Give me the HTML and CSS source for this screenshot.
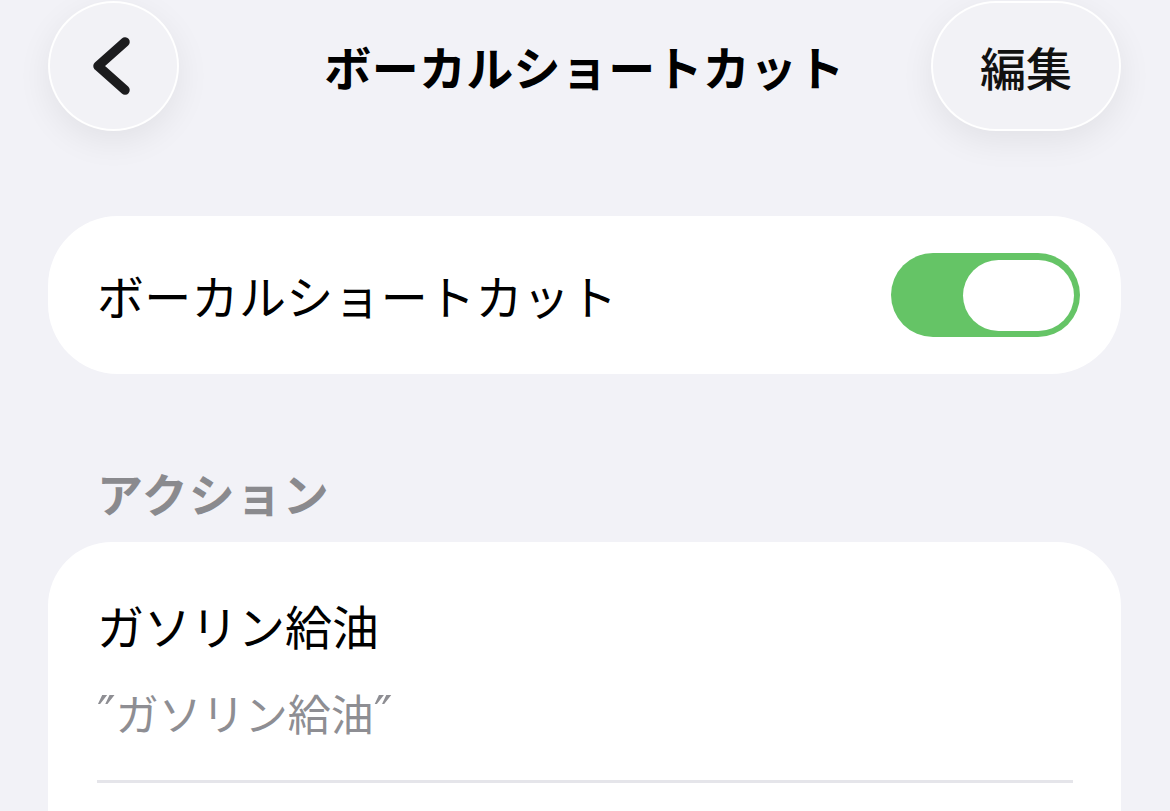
FILE: index.html
```html
<!DOCTYPE html>
<html lang="ja">
<head>
    <meta charset="UTF-8">
    <title>ボーカルショートカット</title>
    <link rel="stylesheet" href="styles.css">
</head>
<body>
    <div class="page">
        <div class="header">
            <div class="headerLeft">
                <button class="roundBtn backBtn" type="button">
                    <svg width="60" height="70" viewBox="0 0 60 70">
                        <path d="M44 11 L17 35 L44 59" fill="none" stroke="#1c1c1e" stroke-width="9.5" stroke-linecap="round" stroke-linejoin="round"/>
                    </svg>
                </button>
            </div>
            <div class="title">ボーカルショートカット</div>
            <div class="headerRight">
                <button class="roundBtn editBtn" type="button">編集</button>
            </div>
        </div>

        <div class="card switchCard">
            <span class="rowText">ボーカルショートカット</span>
            <div class="toggle on">
                <div class="knob"></div>
            </div>
        </div>

        <div class="sectionTitle">アクション</div>

        <div class="card listCard">
            <div class="item">
                <div class="itemTitle">ガソリン給油</div>
                <div class="itemSub"><span class="quote">″</span>ガソリン給油<span class="quote">″</span></div>
                <div class="divider"></div>
            </div>
        </div>
    </div>
</body>
</html>
```

FILE: styles.css
```css
*{
    padding: 0px;
    margin: 0px;
    box-sizing: border-box;
}
html,body{
    background: #f2f2f7;
    overflow: hidden;
}
body{
    font-family: "Noto Sans CJK JP", "Noto Sans", sans-serif;
    color: #000;
}
.page{
    padding: 1px 49px 0 48px;
}
.header{
    display: grid;
    grid-template-columns: 1fr auto 1fr;
    align-items: center;
    height: 130px;
}
.headerLeft{
    display: flex;
    justify-content: flex-start;
}
.headerRight{
    display: flex;
    justify-content: flex-end;
}
.roundBtn{
    height: 130px;
    border: 2px solid rgba(255,255,255,0.95);
    background: #f2f2f6;
    box-shadow: 0 10px 34px rgba(0,0,0,0.07);
    display: flex;
    align-items: center;
    justify-content: center;
    font-family: inherit;
    color: #111;
}
.backBtn{
    width: 131px;
    border-radius: 50%;
}
.backBtn svg{
    margin-left: -6px;
}
.editBtn{
    width: 190px;
    border-radius: 65px;
    font-size: 46px;
    font-weight: 500;
    line-height: 1;
}
.title{
    font-size: 47px;
    font-weight: 700;
    line-height: 60px;
    text-align: center;
    letter-spacing: 0.3px;
}
.card{
    background: #fff;
}
.switchCard{
    margin-top: 85px;
    height: 158px;
    border-radius: 70px;
    display: flex;
    align-items: center;
    justify-content: space-between;
    padding: 0 41px 0 49px;
}
.rowText{
    font-size: 47px;
    line-height: 60px;
    letter-spacing: 0.3px;
}
.toggle{
    width: 189px;
    height: 84px;
    border-radius: 42px;
    background: #e5e5ea;
    display: flex;
    align-items: center;
    padding: 0 6px;
}
.toggle.on{
    background: #65c466;
    justify-content: flex-end;
}
.knob{
    width: 111px;
    height: 71px;
    border-radius: 36px;
    background: #fff;
}
.sectionTitle{
    margin-top: 88px;
    padding-left: 49px;
    font-size: 46px;
    font-weight: 700;
    line-height: 60px;
    color: #8a8a8e;
    letter-spacing: 1px;
}
.listCard{
    margin-top: 20px;
    border-radius: 64px 64px 0 0;
    padding: 53px 48px 80px 49px;
}
.itemTitle{
    font-size: 47px;
    line-height: 60px;
}
.itemSub{
    margin-top: 32px;
    font-size: 43px;
    line-height: 50px;
    height: 50px;
    color: #8e8e93;
}
.quote{
    font-family: "DejaVu Sans", sans-serif;
    font-size: 50px;
    line-height: 0;
}
.divider{
    margin-top: 43px;
    height: 3px;
    background: #e5e5ea;
}
```
